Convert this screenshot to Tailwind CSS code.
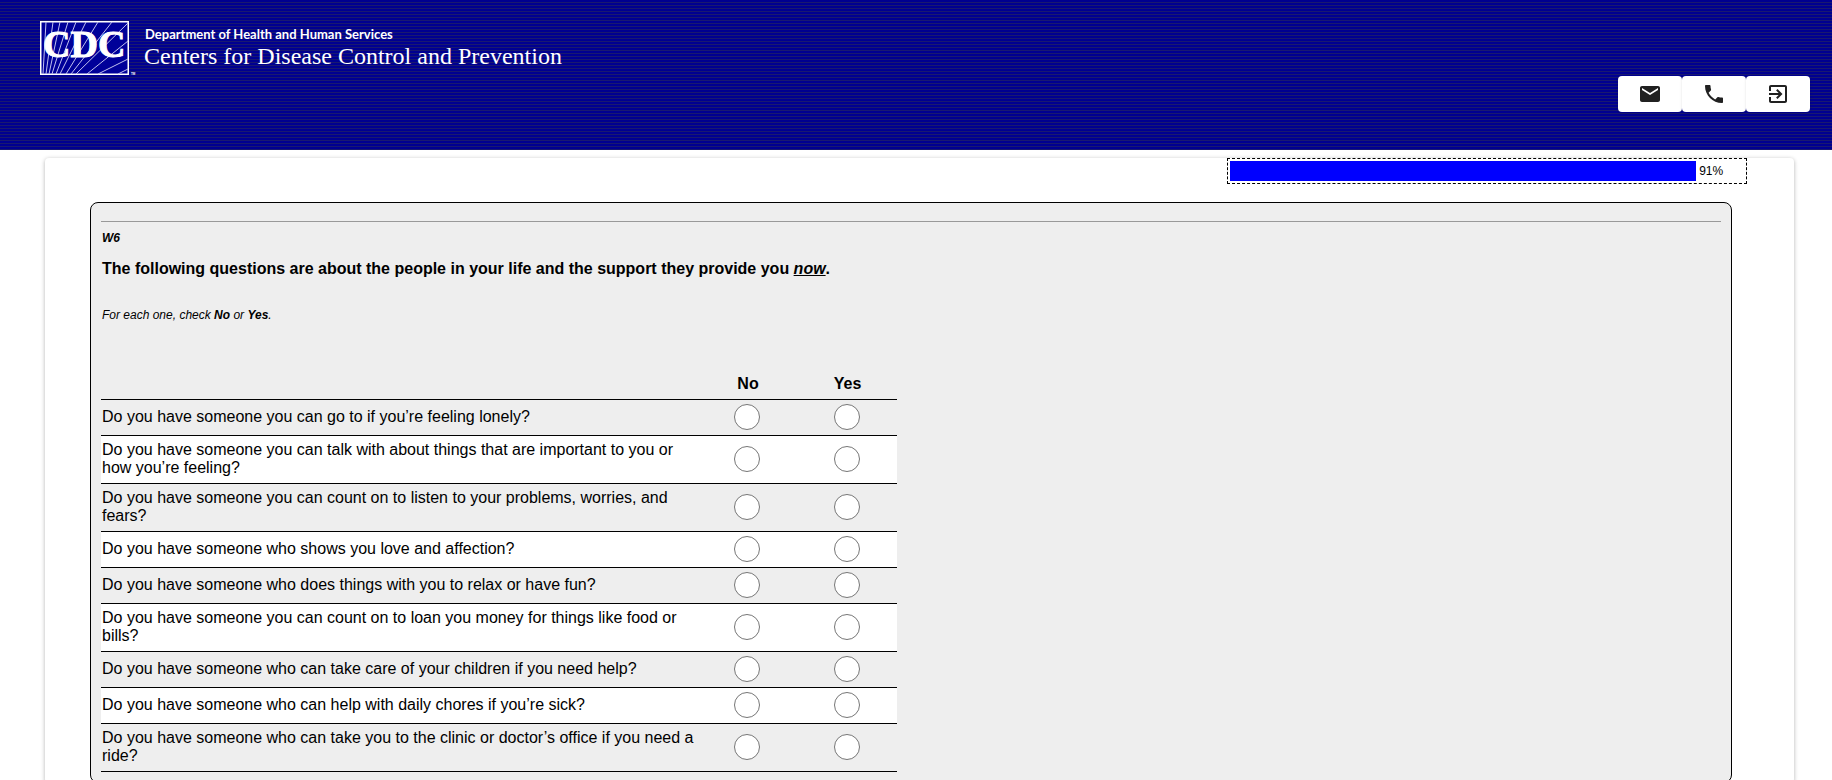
<!DOCTYPE html>
<html lang="en">
<head>
  <meta charset="UTF-8">
  <meta name="viewport" content="width=device-width, initial-scale=1.0">
  <title>CDC Survey</title>
  <script src="https://cdn.jsdelivr.net/npm/@tailwindcss/browser@4"></script>
</head>
<body class="bg-white text-black font-['Liberation_Sans',Arial,sans-serif]">

  <header class="flex justify-between h-[150px] pl-10 pr-[22px] bg-[repeating-linear-gradient(to_bottom,#000090_0px,#000090_2px,#191970_2px,#191970_3px)]">
    <div class="flex items-start pt-[21px] text-white">
      <svg class="w-[98px] h-[56px] overflow-visible" viewBox="0 0 98 56" role="img" aria-label="CDC">
        <rect x="0.75" y="0.75" width="87.5" height="52.5" fill="#000099" stroke="#fff" stroke-width="1.5" />
        <path stroke="#c0c0ee" stroke-width="1" d="M6 1L3 53M13 1L6 53M20 1L9 53M28 1L12 53M36 1L16 53M46 1L20 53M58 1L26 53M72 1L31 53M88 2L36 53M88 20L47 53M88 38L58 53M88 48L78 53" />
        <text x="3" y="36" font-family="Liberation Serif" font-weight="700" font-size="38" fill="#fff" stroke="#fff" stroke-width="1">CDC</text>
        <text x="91" y="54" font-family="Liberation Sans" font-weight="700" font-size="3" fill="#fff">TM</text>
      </svg>
      <div class="pl-[6px] pt-1">
        <p class="pl-px text-[13px] leading-[18px] font-bold font-['Lato',sans-serif]">Department of Health and Human Services</p>
        <h1 class="text-[24px] leading-[26px] font-['Liberation_Serif',serif]">Centers for Disease Control and Prevention</h1>
      </div>
    </div>

    <div class="flex pt-[76px] text-[#212121]">
      <button type="button" aria-label="Email" class="flex items-center justify-center w-16 h-9 bg-white rounded shadow">
        <svg class="w-6 h-6" viewBox="0 0 24 24" fill="currentColor"><path d="M20 4H4c-1.1 0-1.99.9-1.99 2L2 18c0 1.1.9 2 2 2h16c1.1 0 2-.9 2-2V6c0-1.1-.9-2-2-2zm0 4l-8 5-8-5V6l8 5 8-5v2z" /></svg>
      </button>
      <button type="button" aria-label="Phone" class="flex items-center justify-center w-16 h-9 bg-white rounded shadow">
        <svg class="w-6 h-6" viewBox="0 0 24 24" fill="currentColor"><path d="M6.62 10.79c1.44 2.83 3.76 5.14 6.59 6.59l2.2-2.2c.27-.27.67-.36 1.02-.24 1.12.37 2.33.57 3.57.57.55 0 1 .45 1 1V20c0 .55-.45 1-1 1-9.39 0-17-7.61-17-17 0-.55.45-1 1-1h3.5c.55 0 1 .45 1 1 0 1.25.2 2.45.57 3.57.11.35.03.74-.25 1.02l-2.2 2.2z" /></svg>
      </button>
      <button type="button" aria-label="Exit" class="flex items-center justify-center w-16 h-9 bg-white rounded shadow">
        <svg class="w-6 h-6" viewBox="0 0 24 24" fill="currentColor"><path d="M10.09 15.59L11.5 17l5-5-5-5-1.41 1.41L12.67 11H3v2h9.67l-2.58 2.59zM19 3H5c-1.11 0-2 .9-2 2v4h2V5h14v14H5v-4H3v4c0 1.1.89 2 2 2h14c1.1 0 2-.9 2-2V5c0-1.1-.9-2-2-2z" /></svg>
      </button>
    </div>
  </header>

  <main class="mt-2 ml-[45px] mr-[38px] pl-[45px] pr-[47px] rounded shadow-[0_1px_4px_rgba(0,0,0,0.3)]">
    <div class="flex justify-end">
      <div class="flex items-center w-[520px] h-[26px] p-[2px] border border-dashed border-black">
        <div class="h-5 bg-[#0000ff]" style="width: 90.7%"></div>
        <span class="pl-[3px] text-[12px]">91%</span>
      </div>
    </div>

    <form class="mt-[18px] mr-[15px] px-[10px] pt-[18px] pb-[10px] bg-[#eeeeee] border border-black rounded-lg">
      <hr class="border-[#999999]">
      <p class="mt-2 pl-px text-[12px] leading-4 font-bold italic">W6</p>
      <h2 class="mt-[14px] pl-px text-[16px] leading-[18px] font-bold">The following questions are about the people in your life and the support they provide you <em class="underline">now</em>.</h2>
      <p class="mt-7 pl-px text-[12px] leading-[18px] italic">For each one, check <b>No</b> or <b>Yes</b>.</p>

      <table class="mt-[45px] w-[796px] max-w-full table-fixed border-collapse text-[16px] leading-[18px]">
        <thead>
          <tr class="h-[30px] border-b border-black">
            <td></td>
            <th id="no" scope="col" class="w-[100px]">No</th>
            <th id="yes" scope="col" class="w-[99px]">Yes</th>
          </tr>
        </thead>
        <tbody id="questions"></tbody>
      </table>
    </form>
  </main>

  <script>
    const questions = [
      'Do you have someone you can go to if you’re feeling lonely?',
      'Do you have someone you can talk with about things that are important to you or how you’re feeling?',
      'Do you have someone you can count on to listen to your problems, worries, and fears?',
      'Do you have someone who shows you love and affection?',
      'Do you have someone who does things with you to relax or have fun?',
      'Do you have someone you can count on to loan you money for things like food or bills?',
      'Do you have someone who can take care of your children if you need help?',
      'Do you have someone who can help with daily chores if you’re sick?',
      'Do you have someone who can take you to the clinic or doctor’s office if you need a ride?',
    ];

    const radio = (i, value) => `
      <td class="pr-[2px]">
        <input type="radio" name="q${i}" value="${value}" aria-labelledby="q${i} ${value}"
          class="block mx-auto size-[26px] appearance-none rounded-full border border-[#767676] bg-white checked:border-[8px] checked:border-blue-600">
      </td>`;

    document.getElementById('questions').innerHTML = questions
      .map((text, i) => `
        <tr class="h-9 border-b border-black even:bg-white">
          <th id="q${i}" scope="row" class="pl-px pt-[5px] pb-[6px] text-left font-normal">${text}</th>
          ${radio(i, 'no')}
          ${radio(i, 'yes')}
        </tr>
      `).join('');
  </script>
</body>
</html>
